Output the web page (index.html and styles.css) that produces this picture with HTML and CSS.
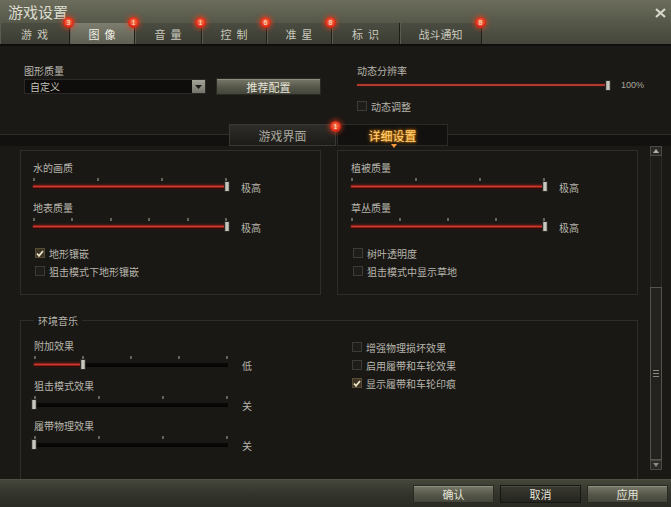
FILE: index.html
```html
<!DOCTYPE html>
<html>
<head>
<meta charset="utf-8">
<title>游戏设置</title>
<link rel="stylesheet" href="styles.css">
</head>
<body>
<div class="window">

  <div class="header">
    <div class="titlebar">
      <span class="title">游戏设置</span>
      <svg class="close" width="11" height="10" viewBox="0 0 11 10"><path d="M1 1 L10 9 M10 1 L1 9" stroke="#d8d8cc" stroke-width="2.2"/></svg>
    </div>
    <div class="tabs">
      <div class="tab" id="tab-game">游&nbsp;&nbsp;戏<span class="badge">3</span></div>
      <div class="tab active" id="tab-image">图&nbsp;&nbsp;像<span class="badge">1</span></div>
      <div class="tab" id="tab-sound">音&nbsp;&nbsp;量<span class="badge">1</span></div>
      <div class="tab" id="tab-control">控&nbsp;&nbsp;制<span class="badge">6</span></div>
      <div class="tab" id="tab-sight">准&nbsp;&nbsp;星<span class="badge">8</span></div>
      <div class="tab" id="tab-marker">标&nbsp;&nbsp;识</div>
      <div class="tab" id="tab-battle">战斗通知<span class="badge">8</span></div>
    </div>
  </div>

  <div class="main">
    <div class="top-settings">
      <div class="quality">
        <div class="caption">图形质量</div>
        <div class="quality-row">
          <div class="select">
            <span class="select-text">自定义</span>
            <span class="select-arrow"><svg width="7" height="4" viewBox="0 0 7 4"><path d="M0 0 H7 L3.5 4 Z" fill="#1c1b18"/></svg></span>
          </div>
          <div class="btn btn-preset">推荐配置</div>
        </div>
      </div>
      <div class="resolution">
        <div class="caption">动态分辨率</div>
        <div class="res-row">
          <div class="res-slider">
            <div class="res-track"></div>
            <div class="thumb" style="left:100%"></div>
          </div>
          <span class="res-value">100%</span>
        </div>
        <div class="check"><span class="box"></span>动态调整</div>
      </div>
    </div>

    <div class="subtabs">
      <div class="subtabs-line first"></div>
      <div class="subtab">游戏界面<span class="badge">1</span></div>
      <div class="subtab active">详细设置<span class="arrow"></span></div>
      <div class="subtabs-line"></div>
    </div>

    <div class="scroll-area">
      <div class="scroll-content">
        <div class="panel-row">
          <div class="panel">
            <div class="field">
              <div class="caption">水的画质</div>
              <div class="slider-row">
                <div class="slider">
                  <div class="ticks"><i></i><i></i><i></i><i></i></div>
                  <div class="track"><div class="fill" style="width:100%"></div></div>
                  <div class="thumb" style="left:100%"></div>
                </div>
                <span class="slider-value">极高</span>
              </div>
            </div>
            <div class="field">
              <div class="caption">地表质量</div>
              <div class="slider-row">
                <div class="slider">
                  <div class="ticks"><i></i><i></i><i></i><i></i><i></i><i></i></div>
                  <div class="track"><div class="fill" style="width:100%"></div></div>
                  <div class="thumb" style="left:100%"></div>
                </div>
                <span class="slider-value">极高</span>
              </div>
            </div>
            <div class="checks">
              <div class="check"><span class="box checked"><svg width="8" height="7" viewBox="0 0 8 7"><path d="M1 3.5 L3 5.8 L7 1" stroke="#efe4c8" stroke-width="1.8" fill="none"/></svg></span>地形镶嵌</div>
              <div class="check"><span class="box"></span>狙击模式下地形镶嵌</div>
            </div>
          </div>

          <div class="panel">
            <div class="field">
              <div class="caption">植被质量</div>
              <div class="slider-row">
                <div class="slider">
                  <div class="ticks"><i></i><i></i><i></i><i></i></div>
                  <div class="track"><div class="fill" style="width:100%"></div></div>
                  <div class="thumb" style="left:100%"></div>
                </div>
                <span class="slider-value">极高</span>
              </div>
            </div>
            <div class="field">
              <div class="caption">草丛质量</div>
              <div class="slider-row">
                <div class="slider">
                  <div class="ticks"><i></i><i></i><i></i><i></i><i></i></div>
                  <div class="track"><div class="fill" style="width:100%"></div></div>
                  <div class="thumb" style="left:100%"></div>
                </div>
                <span class="slider-value">极高</span>
              </div>
            </div>
            <div class="checks">
              <div class="check"><span class="box"></span>树叶透明度</div>
              <div class="check"><span class="box"></span>狙击模式中显示草地</div>
            </div>
          </div>
        </div>

        <div class="panel panel-wide">
          <div class="panel-legend">环境音乐</div>
          <div class="panel-columns">
            <div class="sound-sliders">
              <div class="field">
                <div class="caption">附加效果</div>
                <div class="slider-row">
                  <div class="slider">
                    <div class="ticks"><i></i><i></i><i></i><i></i><i></i></div>
                    <div class="track"><div class="fill" style="width:25%"></div></div>
                    <div class="thumb" style="left:25%"></div>
                  </div>
                  <span class="slider-value">低</span>
                </div>
              </div>
              <div class="field">
                <div class="caption">狙击模式效果</div>
                <div class="slider-row">
                  <div class="slider">
                    <div class="ticks"><i></i><i></i><i></i><i></i></div>
                    <div class="track"><div class="fill" style="width:0%"></div></div>
                    <div class="thumb" style="left:0%"></div>
                  </div>
                  <span class="slider-value">关</span>
                </div>
              </div>
              <div class="field">
                <div class="caption">履带物理效果</div>
                <div class="slider-row">
                  <div class="slider">
                    <div class="ticks"><i></i><i></i><i></i><i></i></div>
                    <div class="track"><div class="fill" style="width:0%"></div></div>
                    <div class="thumb" style="left:0%"></div>
                  </div>
                  <span class="slider-value">关</span>
                </div>
              </div>
            </div>
            <div class="sound-checks">
              <div class="check"><span class="box"></span>增强物理损坏效果</div>
              <div class="check"><span class="box"></span>启用履带和车轮效果</div>
              <div class="check"><span class="box checked"><svg width="8" height="7" viewBox="0 0 8 7"><path d="M1 3.5 L3 5.8 L7 1" stroke="#efe4c8" stroke-width="1.8" fill="none"/></svg></span>显示履带和车轮印痕</div>
            </div>
          </div>
        </div>
      </div>

      <div class="scrollbar">
        <div class="sb-btn"><svg width="6" height="4" viewBox="0 0 6 4"><path d="M0 4 L3 0 L6 4 Z" fill="#b0afa6"/></svg></div>
        <div class="sb-track">
          <div class="sb-thumb"><span class="grip"></span></div>
        </div>
        <div class="sb-btn"><svg width="6" height="4" viewBox="0 0 6 4"><path d="M0 0 L3 4 L6 0 Z" fill="#8a8980"/></svg></div>
      </div>
    </div>
  </div>

  <div class="footer">
    <div class="btn btn-footer">确认</div>
    <div class="btn btn-footer btn-dark">取消</div>
    <div class="btn btn-footer">应用</div>
  </div>

</div>
</body>
</html>
```

FILE: styles.css
```css
html, body {
	margin: 0;
	padding: 0;
}

body {
	width: 671px;
	height: 507px;
	overflow: hidden;
	background-color: #1b1916;
	font-family: "Noto Sans CJK SC", "Noto Sans", sans-serif;
	font-size: 10px;
	color: #b9b8ae;
}

.window {
	display: flex;
	flex-direction: column;
	height: 507px;
}

/* header: title + main tabs */

.header {
	height: 44px;
	background: linear-gradient(#6c6d5c, #585a4b 45%, #45463b);
	border-bottom: 2px solid #0f0e0c;
}

.titlebar {
	height: 23px;
	display: flex;
	align-items: center;
	justify-content: space-between;
	padding: 0 5px 0 8px;
}

.title {
	font-size: 15px;
	line-height: 23px;
	color: #dcdcd0;
}

.close {
	margin-top: 2px;
}

.tabs {
	display: flex;
	height: 21px;
}

.tab {
	position: relative;
	box-sizing: border-box;
	display: flex;
	align-items: center;
	justify-content: center;
	font-size: 11px;
	color: #c9c9bd;
	background: linear-gradient(#4b4c41, #3a3b32);
	border-right: 1px solid #1e1e19;
	box-shadow: inset 1px 0 #5b5c4f;
}

.tab.active {
	background: linear-gradient(#7d7e6f, #5e5f52);
	color: #f2f2e8;
}

#tab-game { width: 70px; }
#tab-image { width: 65px; }
#tab-sound { width: 67px; }
#tab-control { width: 65px; }
#tab-sight { width: 65px; }
#tab-marker { width: 68px; }
#tab-battle { width: 82px; }

.badge {
	position: absolute;
	top: -6px;
	right: -5px;
	width: 11px;
	height: 11px;
	border-radius: 50%;
	background: radial-gradient(circle at 50% 45%, #ff8a55, #e0301c 55%, #a8160c);
	box-shadow: 0 0 5px 1px rgba(255, 60, 20, 0.7);
	color: #ffe0d0;
	font-family: "Liberation Sans", sans-serif;
	font-size: 7px;
	line-height: 11px;
	text-align: center;
	z-index: 2;
}

/* main area */

.main {
	flex: 1;
	display: flex;
	flex-direction: column;
	min-height: 0;
	background-color: #1b1916;
}

.caption {
	height: 13px;
	line-height: 13px;
	font-size: 10px;
	color: #b6b5ab;
}

.top-settings {
	display: flex;
	box-sizing: border-box;
	height: 78px;
	padding: 18px 0 0 24px;
}

.quality {
	width: 297px;
}

.quality-row {
	display: flex;
	align-items: center;
	height: 17px;
	margin-top: 1px;
}

.select {
	display: flex;
	box-sizing: border-box;
	width: 182px;
	height: 15px;
	background: #0e0d0b;
	border: 1px solid #2c2a26;
}

.select-text {
	flex: 1;
	padding-left: 5px;
	line-height: 13px;
	color: #c6c5bb;
}

.select-arrow {
	display: flex;
	align-items: center;
	justify-content: center;
	width: 13px;
	background: linear-gradient(#a4a499, #74746a);
}

.btn {
	display: flex;
	align-items: center;
	justify-content: center;
	box-sizing: border-box;
	font-size: 11px;
	color: #e4e4d8;
	background: linear-gradient(#777868, #56574a 55%, #45463b);
	border: 1px solid #2a2a23;
	box-shadow: inset 0 1px #8d8e7d;
}

.btn-preset {
	width: 105px;
	height: 17px;
	margin-left: 10px;
}

.resolution {
	margin-left: 36px;
}

.res-row {
	display: flex;
	align-items: center;
	height: 14px;
	margin-top: 1px;
}

.res-slider {
	position: relative;
	width: 251px;
	height: 14px;
}

.res-track {
	margin-top: 6px;
	height: 2px;
	background: #b03a2e;
	box-shadow: 0 0 2px #6a1810;
}

.res-value {
	margin-left: 13px;
	font-family: "Liberation Sans", sans-serif;
	font-size: 9px;
	color: #a9a89e;
}

.res-slider .thumb {
	top: 2px;
}

.resolution .check {
	margin-top: 5px;
}

.check {
	display: flex;
	align-items: center;
	height: 18px;
	color: #b6b5ab;
}

.box {
	display: flex;
	align-items: center;
	justify-content: center;
	box-sizing: border-box;
	width: 10px;
	height: 10px;
	margin-right: 4px;
	background: #1f1d1a;
	border: 1px solid #3d3b36;
}

.box.checked {
	background: #3a3326;
	border-color: #5a4d35;
}

/* sub tabs */

.subtabs {
	display: flex;
	height: 22px;
}

.subtabs-line {
	flex: 1;
	margin-top: 10px;
	background: #121110;
	border-top: 1px solid #2f2d29;
}

.subtabs-line.first {
	flex: none;
	width: 229px;
}

.subtab {
	position: relative;
	box-sizing: border-box;
	width: 107px;
	display: flex;
	align-items: center;
	justify-content: center;
	font-size: 12px;
	color: #aaa99f;
	background: linear-gradient(#2e2d29, #1c1b18);
	border: 1px solid #3a3833;
}

.subtab .badge {
	top: -4px;
	right: -6px;
}

.subtab.active {
	width: 111px;
	margin-left: 1px;
	background: #121110;
	border-color: #2b2a26;
	color: #ffd27a;
	text-shadow: 0 0 4px #ff8c00, 0 0 2px #ff9d1a;
}

.arrow {
	position: absolute;
	bottom: -3px;
	left: 53px;
	width: 0;
	height: 0;
	border-left: 3px solid transparent;
	border-right: 3px solid transparent;
	border-top: 4px solid #ff9a3a;
}

/* scrollable area */

.scroll-area {
	flex: 1;
	display: flex;
	min-height: 0;
	overflow: hidden;
}

.scroll-content {
	flex: 1;
	padding: 4px 12px 0 20px;
	overflow: hidden;
}

.panel-row {
	display: flex;
	gap: 16px;
}

.panel {
	box-sizing: border-box;
	width: 301px;
	height: 145px;
	padding: 10px 13px 0 12px;
	border: 1px solid #2f2d29;
	background-color: #1a1815;
}

.panel-row .panel:last-child {
	padding-left: 13px;
}

.slider-row {
	display: flex;
	align-items: flex-start;
	height: 27px;
}

.slider {
	position: relative;
	width: 194px;
	height: 27px;
}

.ticks {
	display: flex;
	justify-content: space-between;
	height: 3px;
	margin-top: 4px;
}

.ticks i {
	width: 2px;
	height: 3px;
	background: #65645c;
}

.track {
	height: 3px;
	margin-top: 4px;
	background: #090807;
	box-shadow: 0 1px #050404;
}

.fill {
	height: 3px;
	background: linear-gradient(#6e150f, #c8382c 50%, #6e150f);
	box-shadow: 0 0 3px rgba(180, 40, 30, 0.6);
}

.thumb {
	position: absolute;
	top: 7px;
	width: 6px;
	height: 11px;
	margin-left: -3px;
	box-sizing: border-box;
	background: linear-gradient(90deg, #8d8c84, #dcdbd2 50%, #8d8c84);
	border: 1px solid #2a2925;
}

.slider-value {
	margin-left: 14px;
	margin-top: 7px;
	line-height: 13px;
	color: #b6b5ab;
}

.checks {
	margin-top: 3px;
	padding-left: 2px;
}

.panel-wide {
	width: 618px;
	height: 180px;
	margin-top: 25px;
	padding: 0 13px 0 13px;
}

.panel-legend {
	width: fit-content;
	margin-top: -7px;
	padding: 0 4px;
	line-height: 13px;
	background-color: #1a1815;
	color: #b6b5ab;
}

.panel-columns {
	display: flex;
}

.sound-sliders {
	width: 318px;
	padding-top: 12px;
}

.sound-checks {
	padding-top: 11px;
}

/* scrollbar */

.scrollbar {
	display: flex;
	flex-direction: column;
	width: 12px;
	margin-right: 9px;
	padding-bottom: 9px;
}

.sb-btn {
	display: flex;
	align-items: center;
	justify-content: center;
	box-sizing: border-box;
	height: 10px;
	background: #2c2a26;
	border: 1px solid #4a4843;
}

.sb-track {
	flex: 1;
	display: flex;
	flex-direction: column;
	background: #1e1c19;
	border-left: 1px solid #2c2a26;
	border-right: 1px solid #2c2a26;
}

.sb-thumb {
	flex: 1;
	display: flex;
	align-items: center;
	justify-content: center;
	margin: 131px -1px 0 -1px;
	background: #24221f;
	border: 1px solid #55534c;
}

.grip {
	width: 6px;
	height: 5px;
	border-top: 1px solid #8a8980;
	border-bottom: 1px solid #8a8980;
	background: linear-gradient(transparent 40%, #8a8980 40%, #8a8980 60%, transparent 60%);
}

/* footer */

.footer {
	display: flex;
	justify-content: flex-end;
	align-items: center;
	height: 27px;
	padding-right: 3px;
	background: linear-gradient(#45463a, #33342b 50%, #2a2b23);
	border-top: 1px solid #4f5044;
}

.btn-footer {
	width: 81px;
	height: 18px;
	margin-left: 6px;
	font-size: 11px;
}

.btn-dark {
	background: linear-gradient(#3a3a32, #25251f);
	box-shadow: inset 0 1px #4d4d42;
	border-color: #161612;
}
```
